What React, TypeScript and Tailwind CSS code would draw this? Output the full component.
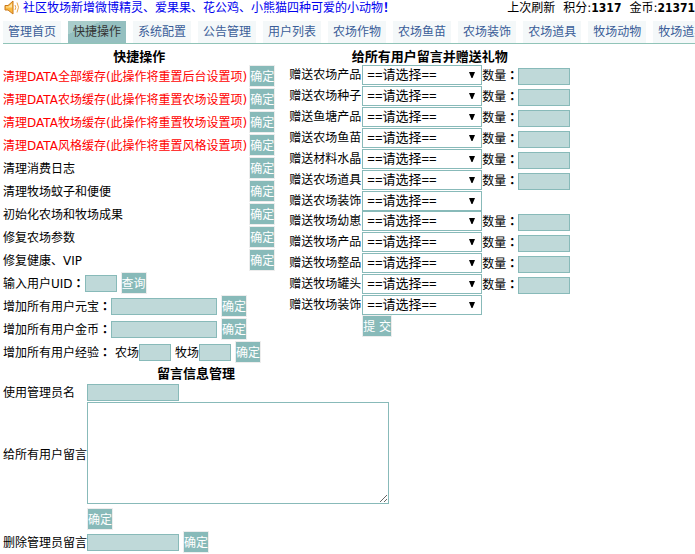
import type { ReactNode } from 'react'

const tabs = [
    "管理首页", "快捷操作", "系统配置", "公告管理", "用户列表", "农场作物",
    "农场鱼苗", "农场装饰", "农场道具", "牧场动物", "牧场道具"
]

const quickActions = [
    { title: "清理DATA全部缓存(此操作将重置后台设置项)", danger: true },
    { title: "清理DATA农场缓存(此操作将重置农场设置项)", danger: true },
    { title: "清理DATA牧场缓存(此操作将重置牧场设置项)", danger: true },
    { title: "清理DATA风格缓存(此操作将重置风格设置项)", danger: true },
    { title: "清理消费日志" },
    { title: "清理牧场蚊子和便便" },
    { title: "初始化农场和牧场成果" },
    { title: "修复农场参数" },
    { title: "修复健康、VIP" }
]

const gifts = [
    { id: "product", title: "赠送农场产品", amount: true },
    { id: "seed", title: "赠送农场种子", amount: true },
    { id: "pond", title: "赠送鱼塘产品", amount: true },
    { id: "fry", title: "赠送农场鱼苗", amount: true },
    { id: "crystal", title: "赠送材料水晶", amount: true },
    { id: "tool", title: "赠送农场道具", amount: true },
    { id: "decor", title: "赠送农场装饰", amount: false },
    { id: "cub", title: "赠送牧场幼崽", amount: true },
    { id: "ranch", title: "赠送牧场产品", amount: true },
    { id: "whole", title: "赠送牧场整品", amount: true },
    { id: "can", title: "赠送牧场罐头", amount: true },
    { id: "ranch-decor", title: "赠送牧场装饰", amount: false }
]

const inputStyle = "h-[17px] border border-[#88bab9] bg-[#bfd9d9] px-1 outline-none"

const Button = ({ children }: { children: ReactNode }) => (
    <button className="h-[22px] mb-px shrink-0 border border-[#ededed] bg-[#88bab9] pt-px text-white whitespace-pre">
        {children}
    </button>
)

// Centred full-width colon
const Colon = () => <span className="font-['Noto_Sans_CJK_TC',sans-serif] font-bold" lang="zh-TW">：</span>

const Speaker = () => (
    <svg viewBox="0 0 16 16" className="w-4 h-4 shrink-0" fill="none">
        <path d="M1 5.500h3L9 1v13L4 10H1z" fill="#fbb93f" stroke="#c9781c" strokeLinejoin="round" />
        <path d="M2 6.500h2.500L8 3.500v4H2z" fill="#ffe3a0" />
        <path d="M11 5q1.500 2.500 0 5M13 2.500q3 4.500 0 10" stroke="#e8a850" />
    </svg>
)

const Header = () => (
    <header>
        <div className="flex items-center justify-between h-[15px] pl-1 whitespace-nowrap">
            <div className="flex items-center gap-[3px]">
                <Speaker />
                <a href="#news" className="text-[#0000ee]">社区牧场新增微博精灵、爱果果、花公鸡、小熊猫四种可爱的小动物<b>！</b></a>
            </div>
            <div className="flex gap-2">
                <span>上次刷新</span>
                <span>积分:<b className="font-['DejaVu_Sans_Condensed','DejaVu_Sans',sans-serif]">1317</b></span>
                <span>金币:<b className="font-['DejaVu_Sans_Condensed','DejaVu_Sans',sans-serif]">21371</b></span>
            </div>
        </div>
        <nav className="flex gap-[7px] ml-[3px] mt-1.5 border-b border-[#91c4b8] overflow-hidden">
            {tabs.map((tab, idx) => (
                <a
                    key={tab}
                    href="#tab"
                    className={idx === 1
                        ? "shrink-0 px-[5px] pt-px leading-[21px] text-[#333] bg-linear-to-br from-[#a9cdcb] from-30% to-[#94bfbf] to-30%"
                        : "shrink-0 px-[5px] pt-px leading-[21px] text-[#3a5d98] bg-[#f4f8f9]"}
                >
                    {tab}
                </a>
            ))}
        </nav>
    </header>
)

const QuickActions = () => (
    <section>
        <h2 className="text-[13px] leading-4 font-bold text-center">快捷操作</h2>
        {quickActions.map((item) => (
            <div key={item.title} className="flex items-center justify-between gap-0.5 h-[23px]">
                <span className={item.danger ? "text-[#ff0000]" : ""}>{item.title}</span>
                <Button>确定</Button>
            </div>
        ))}
        <div className="flex items-center h-[23px]">
            <label htmlFor="uid">输入用户UID<Colon /></label>
            <input id="uid" className={`${inputStyle} w-8 mr-1`} />
            <Button>查询</Button>
        </div>
        <div className="flex items-center h-[23px]">
            <label htmlFor="ingot">增加所有用户元宝<Colon /></label>
            <input id="ingot" className={`${inputStyle} w-[106px] mr-1`} />
            <Button>确定</Button>
        </div>
        <div className="flex items-center h-[23px]">
            <label htmlFor="coin">增加所有用户金币<Colon /></label>
            <input id="coin" className={`${inputStyle} w-[106px] mr-1`} />
            <Button>确定</Button>
        </div>
        <div className="flex items-center h-[23px]">
            <span className="mr-1">增加所有用户经验<Colon /></span>
            <label htmlFor="exp-farm">农场</label>
            <input id="exp-farm" className={`${inputStyle} w-8 mr-1`} />
            <label htmlFor="exp-ranch">牧场</label>
            <input id="exp-ranch" className={`${inputStyle} w-8 mr-1`} />
            <Button>确定</Button>
        </div>
    </section>
)

const Gifts = () => (
    <section>
        <h2 className="text-[13px] leading-4 font-bold text-center">给所有用户留言并赠送礼物</h2>
        {gifts.map((gift) => (
            <div key={gift.id} className={gift.amount ? "flex items-center h-[21px] pb-px" : "flex items-center h-5"}>
                <label htmlFor={gift.id} className="mr-px">{gift.title}</label>
                <div className="relative">
                    <select id={gift.id} className="block w-[120px] h-5 appearance-none border border-[#88bab9] bg-white pl-1 text-[13px] leading-[18px] font-['Liberation_Sans','Noto_Sans_CJK_SC',sans-serif] outline-none">
                        <option>==请选择==</option>
                    </select>
                    <svg viewBox="0 0 6 6" className="absolute right-[7px] top-[7px] w-1.5 h-1.5 pointer-events-none">
                        <path d="M0 0h6L3.500 6h-1z" fill="#000" />
                    </svg>
                </div>
                {gift.amount && (
                    <>
                        <label htmlFor={`${gift.id}-amount`}>数量<Colon /></label>
                        <input id={`${gift.id}-amount`} className={`${inputStyle} w-[52px] self-end`} />
                    </>
                )}
            </div>
        ))}
        <div className="flex pl-[73px]">
            <Button>提 交</Button>
        </div>
    </section>
)

const Messages = () => (
    <section className="grid grid-cols-[auto_1fr] items-center w-fit ml-[3px]">
        <h2 className="col-span-2 text-[13px] leading-5 font-bold text-center">留言信息管理</h2>
        <label htmlFor="admin-name">使用管理员名</label>
        <input id="admin-name" className={`${inputStyle} w-[92px] mb-px`} />
        <label htmlFor="message">给所有用户留言</label>
        <div className="pb-1">
            <textarea id="message" className="block w-[302px] h-[102px] border border-[#88bab9] bg-white outline-none" />
        </div>
        <div className="col-start-2 flex">
            <Button>确定</Button>
        </div>
        <label htmlFor="delete-name">删除管理员留言</label>
        <div className="flex items-center h-[23px]">
            <input id="delete-name" className={`${inputStyle} w-[92px] mr-1`} />
            <Button>确定</Button>
        </div>
    </section>
)

export default function App() {
    return (
        <div className="bg-white text-black text-[12px] leading-[18px] font-['DejaVu_Sans','Noto_Sans_CJK_SC',sans-serif] overflow-x-hidden">
            <Header />
            <main className="pt-[5px]">
                <div className="flex items-start gap-[14px] pl-[3px] whitespace-nowrap">
                    <QuickActions />
                    <Gifts />
                </div>
                <Messages />
            </main>
        </div>
    )
}
